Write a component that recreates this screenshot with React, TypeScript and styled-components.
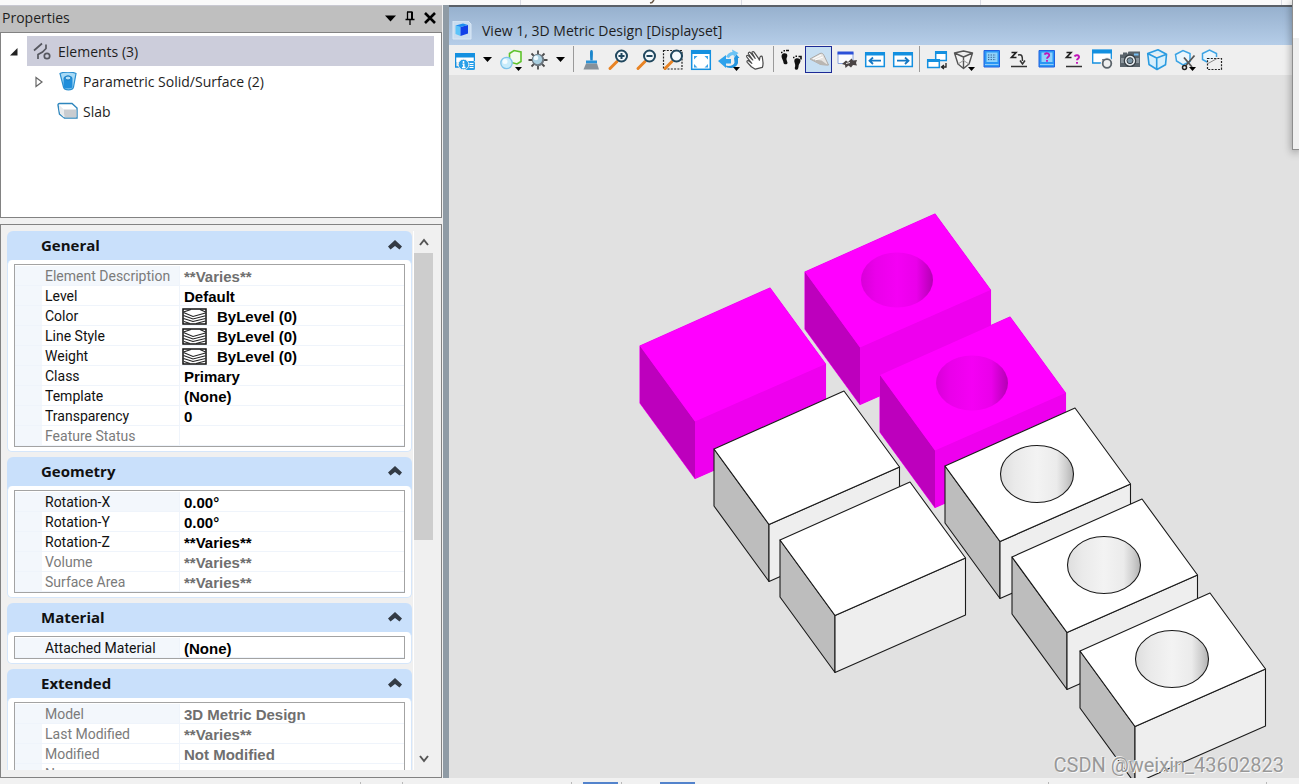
import React from "react";
import styled, { createGlobalStyle, css } from "styled-components";

const GlobalStyle = createGlobalStyle`
  * { box-sizing: border-box; }
  body {
    margin: 0;
    overflow: hidden;
    background: #f0f0f0;
    color: #1e1e1e;
    font-family: "Open Sans", "Noto Sans", sans-serif;
    font-size: 14px;
  }
  button {
    margin: 0;
    padding: 0;
    border: 0;
    background: none;
    color: inherit;
    font: inherit;
  }
  svg { display: block; flex: none; }
`;

/* ---------- frame ---------- */

const Shell = styled.div`
  position: relative;
  display: flex;
  flex-direction: column;
  height: 100vh;
  overflow: hidden;
`;

const RibbonEdge = styled.div`
  display: flex;
  flex: none;
  height: 5px;
  padding-left: 520px;
  background: #fafafa;
`;

const RibbonCell = styled.div<{ $w: number }>`
  width: ${(p) => p.$w}px;
  border-left: 1px solid #d9dbe3;
`;

const Workspace = styled.div`
  display: flex;
  flex: 1;
  min-height: 0;
`;

const StatusStrip = styled.footer`
  display: flex;
  flex: none;
  align-items: flex-end;
  height: 6px;
  background: #f1f1f1;
`;

const StatusCell = styled.div<{ $w: number; $active?: boolean; $edge?: boolean }>`
  width: ${(p) => p.$w}px;
  height: 2px;
  background: ${(p) => (p.$active ? "#5383cc" : "transparent")};
  border-right: ${(p) => (p.$edge ? "1px solid #b8b8b8" : "0")};
`;

const FloatingWindow = styled.aside`
  position: absolute;
  top: 0;
  right: 0;
  width: 7px;
  height: 150px;
  border: solid #8e8e8e;
  border-width: 0 0 1px 1px;
  background: linear-gradient(#ffffff 38px, #f0f0f0 38px);
  box-shadow: 0 2px 8px rgba(0, 0, 0, 0.4);
`;

/* ---------- properties panel ---------- */

const Panel = styled.section`
  display: flex;
  flex: none;
  flex-direction: column;
  width: 443px;
  padding-right: 1px;
  background: #f0f0f0;
`;

const PanelTitle = styled.header`
  display: flex;
  flex: none;
  align-items: center;
  height: 27px;
  padding: 0 2px 2px;
  border-top: 1px solid #c9c9d2;
  background: #bfbfbf;
`;

const PanelName = styled.h1`
  flex: 1;
  margin: 0;
  font-size: 14px;
  font-weight: 400;
  line-height: 20px;
`;

const TitleButton = styled.button`
  display: grid;
  place-items: center;
  width: 20px;
  height: 20px;
`;

const Splitter = styled.div`
  flex: none;
  width: 6px;
  background: #8f9ba5;
`;

const Tree = styled.ul`
  flex: none;
  height: 186px;
  margin: 0 0 6px;
  padding: 3px 7px 0 0;
  border: 1px solid #828282;
  background: #fff;
  list-style: none;
`;

const TreeRow = styled.li<{ $indent: number }>`
  display: flex;
  height: 30px;
  padding-left: ${(p) => p.$indent}px;
`;

const Expander = styled.button`
  display: grid;
  place-items: center;
  width: 26px;
  height: 30px;
  padding-top: 2px;
`;

const TreeItem = styled.span<{ $selected?: boolean }>`
  display: flex;
  flex: 1;
  align-items: center;
  gap: 5px;
  padding: 2px 0 0 5px;
  background: ${(p) => (p.$selected ? "#cccddb" : "none")};
  line-height: 20px;
`;

const PropertyPane = styled.div`
  display: flex;
  flex: 1;
  min-height: 0;
  padding: 6px 8px 7px 6px;
  border: 1px solid #828282;
  background: #f0f0f0;
`;

const CardList = styled.div`
  flex: 1;
  min-width: 0;
  overflow: hidden;
`;

const Card = styled.section`
  margin-bottom: 5px;
  border-radius: 6px;
  background: #c9e0fb;
`;

const CardHeader = styled.h2`
  margin: 0;
`;

const CardToggle = styled.button`
  display: flex;
  align-items: center;
  justify-content: space-between;
  width: 100%;
  height: 29px;
  padding: 0 10px 2px 34px;
  color: #111;
  font-size: 15px;
  font-weight: 700;
`;

const CardBody = styled.div`
  padding: 4px 6px;
  border: solid #d5e6fa;
  border-width: 0 1px 1px;
  border-radius: 5px;
  background: #fff;
`;

const PropertyTable = styled.table`
  width: 100%;
  padding-top: 1px;
  border: 1px solid #a3a3a3;
  border-collapse: separate;
  border-spacing: 0;
  table-layout: fixed;
  font-family: Roboto, "Liberation Sans", sans-serif;
  font-size: 14px;
  line-height: 17px;
`;

const cell = css`
  height: 20px;
  padding: 2px 0 0;
  border-bottom: 1px solid #eff4fb;
  text-align: left;
  white-space: nowrap;
`;

const Gutter = styled.td`
  ${cell}
  width: 27px;
  background: #f3f7fc;
`;

const Label = styled.th<{ $dim?: boolean; $current?: boolean }>`
  ${cell}
  width: 138px;
  padding-left: 3px;
  border-right: 1px solid #eff4fb;
  background: ${(p) => (p.$current ? "#f3f7fc" : "#fff")};
  color: ${(p) => (p.$dim ? "#7b7b7b" : "#111")};
  font-weight: 400;
`;

const Value = styled.td<{ $dim?: boolean }>`
  ${cell}
  color: ${(p) => (p.$dim ? "#6f6f6f" : "#000")};
  font-family: "Liberation Sans", sans-serif;
  font-size: 15px;
  font-weight: 700;
`;

const ValueLine = styled.span<{ $icon?: boolean }>`
  display: flex;
  align-items: center;
  gap: 10px;
  height: 17px;
  padding-left: ${(p) => (p.$icon ? 2 : 4)}px;
`;

const ScrollBar = styled.div`
  display: flex;
  flex-direction: column;
  flex: none;
  width: 20px;
  margin-left: 1px;
  border-left: 1px solid #fff;
`;

const ScrollArrow = styled.button`
  display: grid;
  flex: none;
  place-items: center;
  height: 22px;
`;

const ScrollTrack = styled.div`
  flex: 1;
`;

const ScrollThumb = styled.div`
  height: 58%;
  background: #cdcdcd;
`;

/* ---------- view window ---------- */

const View = styled.main`
  position: relative;
  display: flex;
  flex: 1;
  flex-direction: column;
  min-width: 0;
  border-top: 2px solid #5a6068;
`;

const ViewTitle = styled.header`
  display: flex;
  flex: none;
  align-items: center;
  gap: 9px;
  height: 38px;
  padding: 10px 0 0 3px;
  background: linear-gradient(#97b1ce, #b5cde8);
  line-height: 20px;
`;

const Toolbar = styled.nav`
  display: flex;
  flex: none;
  align-items: flex-start;
  height: 30px;
  padding: 1px 0 0 2px;
  background: #efefef;
`;

const ToolGroup = styled.div<{ $w: number }>`
  display: flex;
  justify-content: space-between;
  width: ${(p) => p.$w}px;
`;

const ToolButton = styled.button<{ $active?: boolean; $narrow?: boolean }>`
  display: grid;
  place-items: center;
  width: ${(p) => (p.$narrow ? 19 : 27)}px;
  height: 27px;
  border: ${(p) => (p.$active ? "1px solid #1c2a96" : "0")};
  background: ${(p) => (p.$active ? "#c7dff2" : "none")};
`;

const ToolDivider = styled.div`
  flex: none;
  width: 1px;
  height: 26px;
  margin: 0 3px;
  background: #9a9a9a;
`;

const Canvas = styled.div`
  flex: 1;
  min-height: 0;
  background: #e1e1e1;
  svg { width: 100%; height: 100%; }
`;

const Watermark = styled.p`
  position: absolute;
  right: 15px;
  bottom: 1px;
  margin: 0;
  color: #989898;
  font-family: Roboto, "Liberation Sans", sans-serif;
  font-size: 20px;
  font-weight: 400;
  line-height: 24px;
  text-shadow: 1px 1px 0 #f8f8f8, -1px -1px 0 #ededed;
`;

/* ---------- tool icons ---------- */

const BLUE = "#1490e0";

const MenuMark = ({ x = 14, y = 18 }: { x?: number; y?: number }) => (
  <path d={`M${x} ${y}h7l-3.5 4z`} fill="#000" />
);

const Lens = ({ sign }: { sign?: string }) => (
  <g transform="translate(1 0)">
    <path d="M9 12.500L2 19.500" stroke="#e88324" strokeWidth="3" strokeLinecap="round" />
    <circle cx="13.500" cy="7" r="5.500" fill="#f4f9fc" stroke="#20475e" strokeWidth="2" />
    {sign && <path d={sign} stroke="#20475e" strokeWidth="2" />}
  </g>
);

const Dashes = ({ x, y, w, h }: { x: number; y: number; w: number; h: number }) => (
  <rect x={x} y={y} width={w} height={h} fill="none" stroke="#222" strokeWidth="1.200" strokeDasharray="2 1.300" />
);

const icons: Record<string, React.ReactNode> = {
  attributes: (
    <>
      <path d="M1.700 5.500V18H8M20.300 6v6" fill="none" stroke={BLUE} strokeWidth="1.400" />
      <path d="M2.500 8h17v5h-17z" fill="#fff" />
      <rect x="1" y="4" width="20" height="4.500" fill={BLUE} />
      <rect x="11" y="12" width="10" height="9" rx="1.500" fill="#2b9fe8" />
      <circle cx="9.500" cy="15.500" r="5.300" fill="#2b9fe8" stroke="#efefef" />
      <path d="M9.500 12v2M8.500 15.300h1.300V18.500M8 18.500h3.500" stroke="#fff" strokeWidth="1.500" fill="none" />
      <path d="M15.500 14.500h4M15.500 16.500h4M15.500 18.500h4" stroke="#fff" />
    </>
  ),
  display: (
    <>
      <path d="M9.500 4.500L14 1.500l7 1.500v9.500l-4 2.500-7.500-2z" fill="#f2faee" stroke="#5ec32c" strokeWidth="1.600" />
      <circle cx="6.500" cy="14" r="5.700" fill="#c8ecfb" stroke="#7ec3ea" strokeWidth="1.300" />
      <circle cx="5" cy="12.500" r="2.500" fill="#f4fcff" />
      <MenuMark x={15} />
    </>
  ),
  brightness: (
    <>
      <path d="M11 1.500v19M1.500 11h19M4.500 4.500l13 13M17.500 4.500l-13 13" stroke="#4b4b4b" strokeWidth="1.800" />
      <circle cx="11" cy="11" r="6.200" fill="#6e7880" />
      <circle cx="10.500" cy="10.500" r="4.700" fill="#a9cfe0" />
      <circle cx="9" cy="9" r="2.300" fill="#effaff" />
    </>
  ),
  brush: (
    <>
      <path d="M11.500 1c2 0 1.500 3 1.200 10.500h-2.400C10 4 9.500 1 11.500 1z" fill="#1c86cc" />
      <path d="M6 11.500h11v3H6z" fill="#2a93d8" />
      <path d="M6 14.500h11l2 6H3.500z" fill="#87919a" />
    </>
  ),
  zoomIn: <Lens sign="M13.500 4v6M10.500 7h6" />,
  zoomOut: <Lens sign="M10.500 7h6" />,
  zoomArea: (
    <>
      <Dashes x={1.500} y={1.500} w={18.500} h={18.500} />
      <Lens />
    </>
  ),
  fit: (
    <>
      <rect x="1.700" y="1.700" width="18.600" height="18.600" fill="#fff" stroke={BLUE} strokeWidth="1.500" />
      <path d="M1 1h20v4H1z" fill={BLUE} />
      <path d="M4 7h3.500L4 10.500zM18 7h-3.500L18 10.500zM4 18.500h3.500L4 15zM18 18.500h-3.500L18 15z" fill="#3aa4ea" />
    </>
  ),
  rotate: (
    <>
      <path d="M8 8C9.500 4.500 12 3 14.500 3l-.5-2.500L20.500 4l-4.500 4-.5-2c-2 0-3.500 1-4.500 3z" fill="#6cc3f5" />
      <path d="M0 12l8-6v4h5v4.500H8V19z" fill="#2ea2ec" />
      <path d="M16 9l2.500-3.500L21.500 9H20v5c-1 4-6 6-11 4.500l-2-2c5 1 9 0 9.500-3z" fill="#2494de" />
      <MenuMark x={15} />
    </>
  ),
  pan: (
    <path
      transform="rotate(-18 11 11)"
      d="M7.500 19.500L4.500 16 2 10.500c-.6-1.500 1.300-2 2-.7l2 3L3.200 5.500c-.5-1.600 1.300-2.200 2-.8L8 10 5.800 3c-.3-1.600 1.500-2 2.100-.7l2.800 7L9.500 3.200c-.2-1.400 1.600-1.600 2.100-.3l2.300 7.300.3 2 1.200-2.300c.8-1.500 2.600-1.300 2.500.2l-1 5.400c-.3 1.500-1 3-2.200 4.500z"
      fill="#fff" stroke="#4b4b4b" strokeWidth="1.200" strokeLinejoin="round"
    />
  ),
  walk: (
    <>
      <path d="M2 5.500c1.500-2 5.500-1.500 5.300 1 0 1.700-1 2.500-.8 4l1 3.200c0 2-3.600 2-4 0-.3-3-3-5.500-1.500-8.200z" fill="#111" />
      <path d="M14.500 10.500c1.700-2 5.700-1.500 6 1.200 0 2-1.500 3-1.800 4.500-.3 2.500-.5 4.500-2.200 4.500-2 0-2-1.700-1.300-3.500.5-2.200-1.700-4.500-.7-6.700z" fill="#111" />
      <path d="M1 3.500h1.500M3.500 1.700H5M6 1.500h3M13 8.500h1.500M15.500 7.200H17M18.500 7.500h2.500v3" stroke="#111" strokeWidth="1.600" fill="none" />
    </>
  ),
  fly: (
    <>
      <path d="M2 10L12 4.500c2-.7 3 0 4 2l4.500 9.500-7.500-.5-6-3z" fill="#e7e5e2" stroke="#aaa8a5" />
      <path d="M2 10l11.500 1.500 7 5-8-.5z" fill="#b9b6b2" />
      <path d="M5 10l8-4M7 11l8-3" stroke="#fff" />
    </>
  ),
  navigate: (
    <>
      <path d="M2 3.500h15v11H2z" fill="#fafcff" stroke="#8ca4dc" />
      <path d="M1.500 2.500h16v3h-16z" fill="#2b50d8" />
      <path d="M6 15l4-3.500L12 13l3.500-3.500 1.500 2 4-.5-1 3 1 2.500-4-.5-2 2.500-2.500-2-3 2.500-.5-3z" fill="#4a4444" />
      <path d="M10 14.500l4-1" stroke="#eee" />
    </>
  ),
  previous: (
    <>
      <path d="M1.700 4h18.600v13.500H1.700z" fill="#fff" stroke={BLUE} strokeWidth="1.500" />
      <path d="M1 3h20v3.500H1z" fill={BLUE} />
      <path d="M17 11.700H6M9 8.500l-3.500 3.200L9 15" fill="none" stroke="#1578c4" strokeWidth="1.800" />
    </>
  ),
  next: (
    <>
      <path d="M1.700 4h18.600v13.500H1.700z" fill="#fff" stroke={BLUE} strokeWidth="1.500" />
      <path d="M1 3h20v3.500H1z" fill={BLUE} />
      <path d="M5 11.700h11M13 8.500l3.500 3.200L13 15" fill="none" stroke="#1578c4" strokeWidth="1.800" />
    </>
  ),
  copyView: (
    <>
      <path d="M9.700 3h10.600v8.500H9.700z" fill="#fff" stroke={BLUE} strokeWidth="1.500" />
      <path d="M9 2h12v3H9z" fill={BLUE} />
      <path d="M1.700 11h11.600v7.500H1.700z" fill="#fff" stroke={BLUE} strokeWidth="1.500" />
      <path d="M1 10h13v3H1z" fill={BLUE} />
      <path d="M20 14v4h-4M18 16l-2.500 2 2.500 2" fill="none" stroke="#222" strokeWidth="1.300" />
    </>
  ),
  perspective: (
    <>
      <path d="M1.500 4L10.500 2l9 2L16 15l-5.500 4.500L5 15zM1.500 4l9 4 9-4M10.500 8v11.500" fill="#f4f4f4" stroke="#555" strokeWidth="1.400" strokeLinejoin="round" />
      <path d="M5 15l5.500-3.500L16 15" stroke="#999" />
      <MenuMark x={15} />
    </>
  ),
  volume: (
    <>
      <path d="M3 1.500h15.500V18H3z" fill="#2a96f4" stroke="#2160e0" />
      <path d="M5.500 3.500h11v9.500h-11z" fill="#8fd2fb" />
      <path d="M7 6h8M7 8.300h8M7 10.600h8" stroke="#345a88" strokeDasharray="1.300 1.300" />
      <path d="M4 15.500h13.500" stroke="#8fcbfb" />
    </>
  ),
  depth: (
    <>
      <path d="M3.500 3.500H8L3.500 8.500H8.500" fill="none" stroke="#222" strokeWidth="1.700" />
      <path d="M10 6c4-1 4.500 1 4.500 6M12 11.500l2.500 3.500 2.500-3.500" fill="none" stroke="#333" strokeWidth="1.500" />
      <path d="M3 17.500h16" stroke="#333" strokeWidth="1.500" />
    </>
  ),
  showVolume: (
    <>
      <path d="M3 1.500h15.500V18H3z" fill="#2a96f4" stroke="#2160e0" />
      <path d="M5.500 3.500h11v9.500h-11z" fill="#8fd2fb" />
      <path d="M8.500 5.700c1-2.200 5-1.700 4.700.6-.2 1.700-2.200 1.700-2.200 3.500M11 11v1.700" fill="none" stroke="#c013b8" strokeWidth="1.800" />
      <path d="M4 15.500h13.500" stroke="#8fcbfb" />
    </>
  ),
  showDepth: (
    <>
      <path d="M3.500 3.500H8L3.500 8.500H8.500" fill="none" stroke="#222" strokeWidth="1.700" />
      <path d="M11.500 7.500c1-2 5-1.500 4.500.8-.3 1.500-2 1.500-2 3M14 13v1.700" fill="none" stroke="#c013b8" strokeWidth="1.900" />
      <path d="M3 17.500h16" stroke="#333" strokeWidth="1.500" />
    </>
  ),
  saved: (
    <>
      <path d="M1.700 1.500h18.600v12.500H1.700z" fill="#fff" stroke={BLUE} strokeWidth="1.300" />
      <path d="M1 .5h20v4H1z" fill={BLUE} />
      <circle cx="16" cy="14.500" r="6.300" fill="#efefef" />
      <circle cx="16" cy="14.500" r="4.300" fill="#efefef" stroke="#5c646b" strokeWidth="1.800" />
      <path d="M11 10l3 .5-2 2.500z" fill="#5c646b" />
    </>
  ),
  camera: (
    <>
      <path d="M1 5.500h3V3.500h4v2L9.500 2.500H21V18H1z" fill="#59636b" />
      <path d="M2 9h18v5H2z" fill="#8d979e" />
      <path d="M15 4.500h4.500v2H15z" fill="#76bdf0" />
      <circle cx="11" cy="11.700" r="5.700" fill="#e5eaee" stroke="#363e44" strokeWidth="1.300" />
      <circle cx="11" cy="11.700" r="3" fill="#7d97a8" stroke="#363e44" />
    </>
  ),
  clip: (
    <path d="M1.700 4.500L12 .8l8.500 4.500-1 10.500-8.500 4.700-8-5zM1.700 4.500l9 4.500 9.800-3.700M10.700 9v11" fill="#d6effc" stroke="#2a9be0" strokeWidth="1.600" strokeLinejoin="round" />
  ),
  clipMask: (
    <>
      <path d="M1.500 5.500L9 1.500l7 3v8L9 16l-6.500-4z" fill="#eaf6fd" stroke="#3aa3e4" strokeWidth="1.500" />
      <path d="M10 8.500L18 18M20.500 6.500L11.500 17" stroke="#555" strokeWidth="1.800" />
      <circle cx="10.500" cy="18.500" r="2" fill="none" stroke="#222" strokeWidth="1.500" />
      <MenuMark x={15} />
    </>
  ),
  clipArea: (
    <>
      <path d="M6 13l-4.500-2.500V4.500L8.500 1l7 3.500V8" fill="#eaf6fd" stroke="#3aa3e4" strokeWidth="1.500" />
      <Dashes x={6.500} y={9.500} w={14} h={11} />
      <path d="M7 14.500l9-5" stroke="#888" />
    </>
  ),
};

const Icon = ({ name }: { name: string }) => (
  <svg width="22" height="22" viewBox="0 0 22 22" fill="none" aria-hidden="true">
    {icons[name]}
  </svg>
);

const Caret = () => (
  <svg width="11" height="7" viewBox="0 0 11 7" aria-hidden="true">
    <path d="M1 1h9L5.500 6z" fill="#000" />
  </svg>
);

const Tool = ({ name, label, active }: { name: string; label: string; active?: boolean }) => (
  <ToolButton type="button" aria-label={label} aria-pressed={active} $active={active}>
    <Icon name={name} />
  </ToolButton>
);

const CaretTool = ({ label }: { label: string }) => (
  <ToolButton type="button" aria-label={label} $narrow>
    <Caret />
  </ToolButton>
);

const zoomTools = [
  ["brush", "Update view"], ["zoomIn", "Zoom in"], ["zoomOut", "Zoom out"], ["zoomArea", "Window area"],
  ["fit", "Fit view"], ["rotate", "Rotate view"], ["pan", "Pan view"],
];
const moveTools = [
  ["walk", "Walk"], ["fly", "Fly"], ["navigate", "Navigate view"], ["previous", "View previous"], ["next", "View next"],
];
const viewTools = [
  ["copyView", "Copy view"], ["perspective", "Change perspective"], ["volume", "Set display depth"],
  ["depth", "Set active depth"], ["showVolume", "Show display depth"], ["showDepth", "Show active depth"],
  ["saved", "Saved view"], ["camera", "Define camera"], ["clip", "Clip volume"], ["clipMask", "Clip mask"],
  ["clipArea", "Clip area"],
];

/* ---------- scene ---------- */

interface BlockProps { x: number; y: number; hole?: boolean; selected?: boolean }

const Block = ({ x, y, hole, selected }: BlockProps) => {
  const tone = selected
    ? { top: "#ff00ff", left: "#bd00bd", front: "#ee00ee", line: "none", bore: "url(#boreSelected)" }
    : { top: "#ffffff", left: "#bdbdbd", front: "#eeeeee", line: "#1a1a1a", bore: "url(#bore)" };
  return (
    <g transform={`translate(${x} ${y})`} stroke={tone.line} strokeWidth="1.100" strokeLinejoin="round">
      <path d="M0 0L130 -58L185.500 18V75L55 132.500L0 57z" fill={tone.front} stroke={selected ? tone.front : "none"} />
      <path d="M0 0L55 75.500V132.500L0 57z" fill={tone.left} />
      <path d="M55 75.500L185.500 18V75L55 132.500z" fill={tone.front} />
      <path d="M0 0L130 -58L185.500 18L55 75.500z" fill={tone.top} />
      {hole && <ellipse cx="92" cy="8" rx={selected ? 36 : 36.5} ry={selected ? 27.5 : 28.5} fill={tone.bore} />}
    </g>
  );
};

const Scene = () => (
  <svg viewBox="449 75 850 703" preserveAspectRatio="xMidYMid meet" role="img" aria-label="3D model with eight blocks">
    <defs>
      <linearGradient id="bore">
        <stop offset="0" stopColor="#dedede" />
        <stop offset="0.200" stopColor="#eaeaea" />
        <stop offset="0.500" stopColor="#f3f3f3" />
        <stop offset="0.770" stopColor="#ebebeb" />
        <stop offset="0.900" stopColor="#cecece" />
        <stop offset="1" stopColor="#b2b2b2" />
      </linearGradient>
      <linearGradient id="boreSelected">
        <stop offset="0" stopColor="#d800d8" />
        <stop offset="0.200" stopColor="#ea00ea" />
        <stop offset="0.500" stopColor="#f400f4" />
        <stop offset="0.770" stopColor="#ea00ea" />
        <stop offset="0.900" stopColor="#cc00cc" />
        <stop offset="1" stopColor="#b400b4" />
      </linearGradient>
    </defs>
    <Block x={805} y={272} hole selected />
    <Block x={880} y={375} hole selected />
    <Block x={640} y={346} selected />
    <Block x={714} y={449} />
    <Block x={945} y={466} hole />
    <Block x={780} y={540} />
    <Block x={1012} y={557} hole />
    <Block x={1080} y={651} hole />
  </svg>
);

/* ---------- property data ---------- */

interface Property { label: string; value: string; dim?: boolean; swatch?: boolean }

const cards: { title: string; rows: Property[] }[] = [
  {
    title: "General",
    rows: [
      { label: "Element Description", value: "**Varies**", dim: true },
      { label: "Level", value: "Default" },
      { label: "Color", value: "ByLevel (0)", swatch: true },
      { label: "Line Style", value: "ByLevel (0)", swatch: true },
      { label: "Weight", value: "ByLevel (0)", swatch: true },
      { label: "Class", value: "Primary" },
      { label: "Template", value: "(None)" },
      { label: "Transparency", value: "0" },
      { label: "Feature Status", value: "", dim: true },
    ],
  },
  {
    title: "Geometry",
    rows: [
      { label: "Rotation-X", value: "0.00°" },
      { label: "Rotation-Y", value: "0.00°" },
      { label: "Rotation-Z", value: "**Varies**" },
      { label: "Volume", value: "**Varies**", dim: true },
      { label: "Surface Area", value: "**Varies**", dim: true },
    ],
  },
  { title: "Material", rows: [{ label: "Attached Material", value: "(None)" }] },
  {
    title: "Extended",
    rows: [
      { label: "Model", value: "3D Metric Design", dim: true },
      { label: "Last Modified", value: "**Varies**", dim: true },
      { label: "Modified", value: "Not Modified", dim: true },
      { label: "New", value: "New", dim: true },
    ],
  },
];

const LayerSwatch = () => (
  <svg width="25" height="17" viewBox="0 0 25 17" aria-hidden="true">
    <rect x="1" y="1" width="23" height="15" fill="#fff" stroke="#111" strokeWidth="1.500" />
    <path d="M1.500 4.500L11 8.500 23.500 5M1.500 7.500L11 11 23.500 7.800M1.500 10.500L11 13.500 23.500 10.500M2 13.500L8 15.500M14 15.500L23.500 13M1.500 4L9 1.500M18 1.500L23.500 4" fill="none" stroke="#222" strokeWidth="1.100" />
  </svg>
);

const PropertyCard = ({ title, rows }: { title: string; rows: Property[] }) => (
  <Card>
    <CardHeader>
      <CardToggle type="button" aria-expanded="true">
        {title}
        <svg width="14" height="10" viewBox="0 0 14 10" aria-hidden="true">
          <path d="M7 0L14 6.500 11.500 9.500 7 6 2.500 9.500 0 6.500z" fill="#333b45" />
        </svg>
      </CardToggle>
    </CardHeader>
    <CardBody>
      <PropertyTable aria-label={title}>
        <tbody>
          {rows.map((row, i) => (
            <tr key={row.label}>
              <Gutter />
              <Label scope="row" $dim={row.dim} $current={i === 0}>{row.label}</Label>
              <Value $dim={row.dim}>
                <ValueLine $icon={row.swatch}>
                  {row.swatch && <LayerSwatch />}
                  {row.value}
                </ValueLine>
              </Value>
            </tr>
          ))}
        </tbody>
      </PropertyTable>
    </CardBody>
  </Card>
);

export default function App() {
  return (
    <Shell>
      <GlobalStyle />
      <RibbonEdge>
        <RibbonCell $w={221}>
          <svg width="140" height="4" viewBox="0 0 140 4" aria-hidden="true">
            <path d="M129 3l2-.5 2-2.500" fill="none" stroke="#6a5a48" strokeWidth="1.500" />
          </svg>
        </RibbonCell>
        <RibbonCell $w={239} />
        <RibbonCell $w={301} />
        <RibbonCell $w={10} />
      </RibbonEdge>

      <Workspace>
        <Panel>
          <PanelTitle>
            <PanelName>Properties</PanelName>
            <TitleButton type="button" aria-label="Window options">
              <svg width="11" height="7" viewBox="0 0 11 7"><path d="M0 .5h11L5.500 6.500z" fill="#000" /></svg>
            </TitleButton>
            <TitleButton type="button" aria-label="Pin">
              <svg width="10" height="14" viewBox="0 0 10 14">
                <path d="M2.500 1v7.500M2 1h5.500M.5 8.500h9M5 8.500V14" fill="none" stroke="#000" strokeWidth="1.300" />
                <path d="M6 1h2v7.500H6z" fill="#000" />
              </svg>
            </TitleButton>
            <TitleButton type="button" aria-label="Close">
              <svg width="12" height="12" viewBox="0 0 12 12"><path d="M1 1l10 10M11 1L1 11" stroke="#000" strokeWidth="2.600" /></svg>
            </TitleButton>
          </PanelTitle>

          <Tree>
            <TreeRow $indent={0}>
              <Expander type="button" aria-label="Collapse Elements">
                <svg width="8" height="8" viewBox="0 0 8 8"><path d="M7.500 0v7.500H0z" fill="#222" /></svg>
              </Expander>
              <TreeItem $selected>
                <svg width="21" height="20" viewBox="0 0 21 20" fill="none" stroke="#55575f" strokeWidth="1.700">
                  <path d="M2 8.500l8-7M14 2.500v4L10.500 10 6 12.500V17" />
                  <circle cx="15" cy="14" r="2.700" />
                </svg>
                Elements (3)
              </TreeItem>
            </TreeRow>
            <TreeRow $indent={25}>
              <Expander type="button" aria-label="Expand Parametric Solid/Surface">
                <svg width="8" height="12" viewBox="0 0 8 12"><path d="M1 1.500L7 6 1 10.500z" fill="#fff" stroke="#666" strokeWidth="1.200" /></svg>
              </Expander>
              <TreeItem>
                <svg width="21" height="20" viewBox="0 0 21 20">
                  <path d="M3 1.500C6-.3 16-.3 19 1.500L16.500 15c-1 3.700-9 3.700-10 0z" fill="#a8daf6" stroke="#2a8fd0" strokeWidth="1.200" />
                  <path d="M6.500 6.500c0-4 9-4 9 0v8.500c-1 2-8 2-9 0z" fill="#1f8edb" />
                  <ellipse cx="11" cy="6" rx="3" ry="2" fill="#b5e0f8" stroke="#1778bd" />
                </svg>
                Parametric Solid/Surface (2)
              </TreeItem>
            </TreeRow>
            <TreeRow $indent={51}>
              <TreeItem>
                <svg width="21" height="20" viewBox="0 0 21 20">
                  <path d="M1 3c0-1 .5-1.500 1.500-1.500H15l5 4.500v10H7.500L2.500 12z" fill="#fff" stroke="#2e86bd" strokeWidth="1.400" />
                  <path d="M6.500 7.500h13v8h-12z" fill="#c9ccd0" />
                  <path d="M2 3l5 4.500v8L3 11.500z" fill="#e9ebed" />
                </svg>
                Slab
              </TreeItem>
            </TreeRow>
          </Tree>

          <PropertyPane>
            <CardList>
              {cards.map((card) => <PropertyCard key={card.title} {...card} />)}
            </CardList>
            <ScrollBar>
              <ScrollArrow type="button" aria-label="Scroll up">
                <svg width="10" height="8" viewBox="0 0 10 8"><path d="M1 7l4-5 4 5" fill="none" stroke="#555" strokeWidth="2" /></svg>
              </ScrollArrow>
              <ScrollTrack><ScrollThumb /></ScrollTrack>
              <ScrollArrow type="button" aria-label="Scroll down">
                <svg width="10" height="8" viewBox="0 0 10 8"><path d="M1 1l4 5 4-5" fill="none" stroke="#555" strokeWidth="2" /></svg>
              </ScrollArrow>
            </ScrollBar>
          </PropertyPane>
        </Panel>

        <Splitter />

        <View>
          <ViewTitle>
            <svg width="21" height="20" viewBox="0 0 21 20" aria-hidden="true">
              <path d="M1 0h15l3 3v15H1z" fill="#c9dcef" stroke="#d9e8f6" />
              <path d="M3.500 4.500l5 1.500v9l-5-2z" fill="#5cc4fa" />
              <path d="M8.500 6L16 4v8.500L8.500 15z" fill="#1240e8" />
              <path d="M3.500 4.500L11 2.500 16 4 8.500 6z" fill="#1c8df0" />
            </svg>
            View 1, 3D Metric Design [Displayset]
          </ViewTitle>
          <Toolbar aria-label="View tools">
            <ToolGroup $w={119}>
              <Tool name="attributes" label="View attributes" />
              <CaretTool label="View attribute options" />
              <Tool name="display" label="Display style" />
              <Tool name="brightness" label="Adjust brightness" />
              <CaretTool label="Brightness options" />
            </ToolGroup>
            <ToolDivider />
            <ToolGroup $w={193}>
              {zoomTools.map(([name, label]) => <Tool key={name} name={name} label={label} />)}
            </ToolGroup>
            <ToolDivider />
            <ToolGroup $w={139}>
              {moveTools.map(([name, label]) => <Tool key={name} name={name} label={label} active={name === "fly"} />)}
            </ToolGroup>
            <ToolDivider />
            <ToolGroup $w={303}>
              {viewTools.map(([name, label]) => <Tool key={name} name={name} label={label} />)}
            </ToolGroup>
          </Toolbar>
          <Canvas><Scene /></Canvas>
          <Watermark>CSDN @weixin_43602823</Watermark>
        </View>
      </Workspace>

      <StatusStrip>
        <StatusCell $w={361} $edge />
        <StatusCell $w={42} $edge />
        <StatusCell $w={169} $edge />
        <StatusCell $w={11} />
        <StatusCell $w={35} $active />
        <StatusCell $w={4} $edge />
        <StatusCell $w={38} />
        <StatusCell $w={35} $active />
        <StatusCell $w={354} $edge />
        <StatusCell $w={218} $edge />
      </StatusStrip>
      <FloatingWindow />
    </Shell>
  );
}
